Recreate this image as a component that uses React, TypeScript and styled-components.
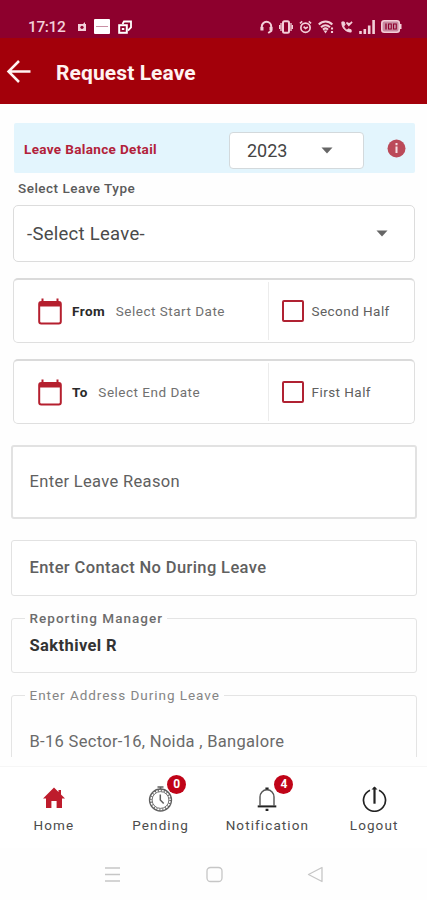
import React from "react";
import styled, { createGlobalStyle } from "styled-components";

const GlobalStyle = createGlobalStyle`
  * { box-sizing: border-box; }
  body { margin: 0; background: #fefefe; font-family: Roboto, "Noto Sans", sans-serif; }
`;

const Screen = styled.div`
  width: 427px;
  height: 900px;
  display: flex;
  flex-direction: column;
  overflow: hidden;
  background: #fefefe;
`;

const StatusBar = styled.div`
  height: 38px;
  flex: none;
  padding: 14px 25px 0 28px;
  display: flex;
  justify-content: space-between;
  background: #8d002d;
  color: #f3cfd9;
`;

const StatusGroup = styled.div<{ $gap: number }>`
  display: flex;
  align-items: center;
  height: 25px;
  gap: ${(p) => p.$gap}px;
  svg { display: block; flex: none; }
`;

const Clock = styled.span`
  width: 42px;
  font-size: 15.5px;
  font-weight: 500;
  letter-spacing: -0.4px;
`;

const AppBar = styled.header`
  height: 66px;
  flex: none;
  display: flex;
  align-items: center;
  padding: 2px 6px 0;
  gap: 25px;
  background: #a3000a;
  color: #fff3f1;
`;

const Title = styled.h1`
  margin: 1px 0 0;
  font-size: 21px;
  font-weight: 700;
  letter-spacing: 0.1px;
`;

const Form = styled.main`
  flex: none;
  height: 653px;
  padding: 19px 10px 0 11px;
  overflow: hidden;
  display: flex;
  flex-direction: column;
`;

const BalancePanel = styled.div`
  height: 50px;
  flex: none;
  margin: 0 2px 0 3px;
  padding: 0 9px 0 10px;
  display: flex;
  align-items: center;
  background: #e3f5fd;
  border-radius: 2px;
`;

const BalanceTitle = styled.span`
  width: 205px;
  padding-top: 2px;
  font-size: 13.5px;
  font-weight: 700;
  letter-spacing: 0.35px;
  color: #b2223a;
`;

const YearSelect = styled.div`
  width: 135px;
  height: 37px;
  margin-top: 4px;
  padding: 0 30px 0 17px;
  display: flex;
  align-items: center;
  justify-content: space-between;
  background: #fff;
  border: 1px solid #d3d9dc;
  border-radius: 4px;
  font-size: 18px;
  color: #444;
`;

const InfoBadge = styled.span`
  margin: 0 0 0 auto;
  display: flex;
`;

const Caption = styled.div`
  height: 32px;
  flex: none;
  padding: 7px 0 0 7px;
  font-size: 13.5px;
  line-height: 16px;
  font-weight: 500;
  letter-spacing: 0.5px;
  color: #5a5a5a;
`;

const TypeSelect = styled.div`
  height: 57px;
  flex: none;
  margin: 0 2px;
  padding: 0 26px 0 13px;
  display: flex;
  align-items: center;
  justify-content: space-between;
  background: #fff;
  border: 1px solid #dcdcdc;
  border-radius: 5px;
  font-size: 18.5px;
  letter-spacing: 0.28px;
  color: #4a4a4a;
`;

const DateRow = styled.div`
  height: 65px;
  flex: none;
  margin: 16px 2px 0;
  display: flex;
  background: #fff;
  border: 1px solid #dfdfdf;
  border-top: 2px solid #dadada;
  border-radius: 5px;
`;

const DatePart = styled.div`
  width: 255px;
  padding-left: 24px;
  display: flex;
  align-items: center;
  margin: 2px 0;
  border-right: 1px solid #ececec;
  font-size: 13.5px;
`;

const DateKey = styled.span`
  margin: 0 10.5px 0 10px;
  font-weight: 700;
  letter-spacing: 0.5px;
  color: #2a2a2a;
`;

const DateHint = styled.span`
  letter-spacing: 0.5px;
  color: #707070;
`;

const HalfPart = styled.label`
  flex: 1;
  padding-left: 12.5px;
  display: flex;
  align-items: center;
  gap: 8px;
  font-size: 13.5px;
  letter-spacing: 0.45px;
  color: #606060;
`;

const CheckBox = styled.span`
  width: 22px;
  height: 22px;
  border: 2px solid #b02232;
  border-radius: 2px;
`;

const Field = styled.div<{ $height: number; $gap: number; $line?: number; $weight?: number; $spacing?: number }>`
  height: ${(p) => p.$height}px;
  flex: none;
  margin-top: ${(p) => p.$gap}px;
  padding: 0 0 1px ${(p) => 18.5 - (p.$line ?? 1)}px;
  display: flex;
  align-items: center;
  background: #fff;
  border: ${(p) => p.$line ?? 1}px solid #e2e2e2;
  border-radius: 3px;
  font-size: 16.5px;
  font-weight: ${(p) => p.$weight ?? 400};
  letter-spacing: ${(p) => p.$spacing ?? 0.33}px;
  color: #606060;
`;

const Outlined = styled.fieldset<{ $height: number; $gap: number; $pad: number; $weight: number; $color: string; $spacing: number }>`
  height: ${(p) => p.$height}px;
  flex: none;
  min-width: 0;
  margin: ${(p) => p.$gap}px 0 0;
  padding: ${(p) => p.$pad}px 0 0 17.5px;
  border: 1.5px solid #e4e4e4;
  border-radius: 3px;
  font-size: 16.5px;
  line-height: 20px;
  font-weight: ${(p) => p.$weight};
  letter-spacing: ${(p) => p.$spacing}px;
  color: ${(p) => p.$color};
`;

const Legend = styled.legend<{ $weight: number; $color: string; $spacing: number }>`
  margin-left: -5px;
  padding: 0 4px 0 5px;
  font-size: 13.5px;
  line-height: 16px;
  font-weight: ${(p) => p.$weight};
  letter-spacing: ${(p) => p.$spacing}px;
  color: ${(p) => p.$color};
`;

const TabBar = styled.nav`
  height: 82px;
  flex: none;
  margin-top: 9px;
  border-top: 1px solid #f6f6f6;
  display: grid;
  grid-template-columns: repeat(4, 1fr);
  background: #fff;
`;

const Tab = styled.a`
  display: flex;
  flex-direction: column;
  align-items: center;
  padding: 19px 0 0 1px;
  font-size: 13.5px;
  line-height: 18px;
  letter-spacing: 1.1px;
  color: #4c4c4c;
`;

const TabIcon = styled.span`
  position: relative;
  height: 30px;
  display: flex;
  svg { display: block; }
`;

const Count = styled.span`
  position: absolute;
  left: 19px;
  top: -11px;
  width: 19px;
  height: 19px;
  border-radius: 50%;
  background: #c00418;
  color: #fff;
  font-size: 12px;
  line-height: 19px;
  font-weight: 700;
  letter-spacing: 0;
  text-align: center;
`;

const SystemBar = styled.div`
  flex: 1;
  padding: 1px 0 0 104px;
  display: flex;
  align-items: center;
  gap: 84.5px;
`;

const Caret = () => (
  <svg width="12" height="7" viewBox="0 0 12 7"><path d="M0.5 0.5h11L6 6.5z" fill="#666" /></svg>
);

const Calendar = () => (
  <svg width="24" height="27" viewBox="0 0 24 27" fill="none">
    <path d="M4.5 0.5v4M19.5 0.5v4" stroke="#b51f2e" strokeWidth="2" />
    <rect x="1.2" y="4" width="21.6" height="21.5" rx="2" stroke="#b51f2e" strokeWidth="2" />
    <path d="M1 4h22v4.500H1z" fill="#b51f2e" />
  </svg>
);

const HomeIcon = () => (
  <svg width="24" height="25" viewBox="0 0 24 25">
    <path d="M12 1.500L1 12.600h3V22h5.400v-7h5.200v7H20v-9.400h3L19 8.600V4h-2.500v2z" fill="#be1c2c" />
  </svg>
);

const StopwatchIcon = () => (
  <svg width="25" height="26" viewBox="0 0 25 26" fill="none" stroke="#606060">
    <circle cx="12.5" cy="14" r="11" strokeWidth="1.3" />
    <circle cx="12.5" cy="14" r="8.4" strokeWidth="0.9" />
    <circle cx="12.5" cy="14" r="9.7" strokeWidth="2" strokeDasharray="1 2.05" />
    <path d="M9.500 1h6M12.5 1v2.500M12.3 8.500V14l3.400 3.600" strokeWidth="1.500" />
  </svg>
);

const BellIcon = () => (
  <svg width="24" height="26" viewBox="0 0 24 26" fill="none" stroke="#222">
    <path d="M5 19.500V11c0-4 2.800-7.200 7-7.200s7 3.200 7 7.200v8.500" stroke="#555" strokeWidth="1.400" />
    <path d="M2.700 20.400h18.600" strokeWidth="2" />
    <path d="M10.400 2.500h3.200M10.600 23.800h2.800" strokeWidth="2.200" />
  </svg>
);

const PowerIcon = () => (
  <svg width="25" height="26" viewBox="0 0 25 26" fill="none" stroke="#222">
    <path d="M8 4.200a11 11 0 1 0 9 0" strokeWidth="1.700" />
    <path d="M12.500 1.500v16.200" strokeWidth="2.200" />
    <path d="M9.500 3.600l3-3 3 3z" fill="#222" stroke="none" />
  </svg>
);

export default function App() {
  return (
    <>
      <GlobalStyle />
      <Screen>
        <StatusBar>
          <StatusGroup $gap={8}>
            <Clock>17:12</Clock>
            <svg width="8" height="9" viewBox="0 0 8 9"><path d="M0 2h5l2-2v2h1v7H0z" fill="currentColor" /><circle cx="4" cy="5.300" r="1.600" fill="#8d002d" /></svg>
            <svg width="16" height="15" viewBox="0 0 16 15"><rect width="16" height="15" rx="1" fill="#fff" /><path d="M2 7.500h12" stroke="#c990a5" /></svg>
            <svg width="14" height="14" viewBox="0 0 14 14" fill="none" stroke="#fff"><path d="M4.500 4L6 1.500h7v6L10 10.500" strokeWidth="1.800" /><rect x="1.200" y="5.200" width="7.600" height="7.600" strokeWidth="2" /><path d="M3.800 9h2.500" strokeWidth="2" /></svg>
          </StatusGroup>
          <StatusGroup $gap={6}>
            <svg width="13" height="14" viewBox="0 0 13 14" fill="none" stroke="currentColor" strokeWidth="2"><path d="M1.800 10V6.500a4.700 4.700 0 0 1 9.400 0v4.500l-3 2" /><path d="M2 7v3.500M11 7v3.500" strokeWidth="3" /></svg>
            <svg width="14" height="14" viewBox="0 0 14 14" fill="none" stroke="currentColor"><rect x="4" y="1.200" width="6" height="11.600" rx="1.500" strokeWidth="2" /><path d="M2 3v8M12 3v8M.5 5v4M13.500 5v4" strokeWidth="1.300" /></svg>
            <svg width="13" height="14" viewBox="0 0 14 14" fill="none" stroke="currentColor" strokeWidth="1.800"><circle cx="7" cy="7.800" r="5" /><path d="M1 3l2.500-2M13 3l-2.500-2M5 6.500l2 2 2.500-1.500" /></svg>
            <svg width="16" height="14" viewBox="0 0 16 14" fill="none" stroke="currentColor" strokeWidth="2.100"><path d="M.8 4.500c4-4 9.500-4 13.500 0M3 7.200c3-2.600 6-2.600 9 0M5 9.600c2-1.600 3.500-1.600 5 0" /><path d="M5.500 10.500h4l-2 3z" fill="currentColor" stroke="none" /><path d="M14 7.500v6" strokeDasharray="2 1.500" /></svg>
            <svg width="13" height="14" viewBox="0 0 14 14" fill="none" stroke="currentColor"><path d="M2 1.500c-.5 6 4 11 10 11V10l-3-1-1.500 1.500C5.500 9 4.500 8 4 6l1.500-1.500L4.500 1.500z" fill="currentColor" /><path d="M7 2l2.500 3L13 1.500M9.500 5V2.500" strokeWidth="1.800" /></svg>
            <svg width="16" height="14" viewBox="0 0 16 14" fill="none" stroke="currentColor" strokeWidth="2.600"><path d="M1.500 14v-3M5.800 14V9M10.200 14V5.500M14.600 14V0" /></svg>
            <svg width="21" height="13" viewBox="0 0 21 13"><rect x=".8" y=".8" width="17.500" height="11.400" rx="2.500" fill="#c98ba1" stroke="currentColor" strokeWidth="1.600" /><path d="M19.500 4v5" stroke="currentColor" strokeWidth="2" /><path d="M5 3.500v6" stroke="#8d002d" strokeWidth="1.300" /><rect x="7.500" y="4" width="2.800" height="5" fill="none" stroke="#8d002d" /><rect x="12.500" y="4" width="2.800" height="5" fill="none" stroke="#8d002d" /></svg>
          </StatusGroup>
        </StatusBar>

        <AppBar>
          <svg width="25" height="24" viewBox="0 0 25 24" fill="none" stroke="currentColor" strokeWidth="2.500"><path d="M24.500 11.500H2.500M13 1L2.500 11.500 13 22" /></svg>
          <Title>Request Leave</Title>
        </AppBar>

        <Form>
          <BalancePanel>
            <BalanceTitle>Leave Balance Detail</BalanceTitle>
            <YearSelect>2023<Caret /></YearSelect>
            <InfoBadge>
              <svg width="19" height="19" viewBox="0 0 19 19"><circle cx="9.500" cy="9.500" r="9" fill="#bb4a59" /><path d="M9.500 4v2.200M9.500 7.500v6.500" stroke="#f6dfe3" strokeWidth="2" /></svg>
            </InfoBadge>
          </BalancePanel>

          <Caption>Select Leave Type</Caption>
          <TypeSelect>-Select Leave-<Caret /></TypeSelect>

          <DateRow>
            <DatePart><Calendar /><DateKey>From</DateKey><DateHint>Select Start Date</DateHint></DatePart>
            <HalfPart><CheckBox />Second Half</HalfPart>
          </DateRow>
          <DateRow>
            <DatePart><Calendar /><DateKey>To</DateKey><DateHint>Select End Date</DateHint></DatePart>
            <HalfPart><CheckBox />First Half</HalfPart>
          </DateRow>

          <Field $height={74} $gap={21} $line={2}>Enter Leave Reason</Field>
          <Field $height={56} $gap={21} $weight={500} $spacing={0.38}>Enter Contact No During Leave</Field>

          <Outlined $height={63} $gap={14} $pad={10} $weight={700} $color="#333" $spacing={0.4}>
            <Legend $weight={500} $color="#6c6c6c" $spacing={1.03}>Reporting Manager</Legend>
            Sakthivel R
          </Outlined>
          <Outlined $height={90} $gap={14} $pad={29} $weight={400} $color="#6a6a6a" $spacing={0.31}>
            <Legend $weight={400} $color="#858585" $spacing={0.96}>Enter Address During Leave</Legend>
            B-16 Sector-16, Noida , Bangalore
          </Outlined>
        </Form>

        <TabBar>
          <Tab><TabIcon><HomeIcon /></TabIcon>Home</Tab>
          <Tab><TabIcon><StopwatchIcon /><Count>0</Count></TabIcon>Pending</Tab>
          <Tab><TabIcon><BellIcon /><Count>4</Count></TabIcon>Notification</Tab>
          <Tab><TabIcon><PowerIcon /></TabIcon>Logout</Tab>
        </TabBar>

        <SystemBar>
          <svg width="17" height="17" viewBox="0 0 17 17" stroke="#c6c6c6" strokeWidth="1.300"><path d="M1 2h15M1 8.500h15M1 15h15" /></svg>
          <svg width="17" height="17" viewBox="0 0 17 17" fill="none" stroke="#c6c6c6" strokeWidth="1.300"><rect x="1" y="1.500" width="15" height="14" rx="3.500" /></svg>
          <svg width="17" height="17" viewBox="0 0 17 17" fill="none" stroke="#c6c6c6" strokeWidth="1.300"><path d="M15 1.500v14L1.500 8.500z" strokeLinejoin="round" /></svg>
        </SystemBar>
      </Screen>
    </>
  );
}
